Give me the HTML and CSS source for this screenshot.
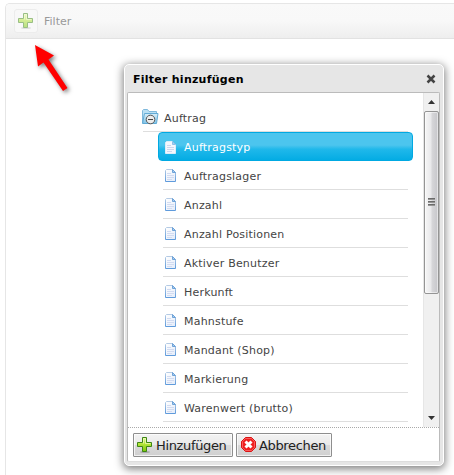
FILE: index.html
```html
<!DOCTYPE html>
<html lang="de">
<head>
<meta charset="utf-8">
<title>Filter</title>
<link rel="stylesheet" href="styles.css">
</head>
<body>
<svg width="0" height="0" class="defs">
  <defs>
    <linearGradient id="green" x1="0" y1="0" x2="0" y2="1"><stop offset="0" stop-color="#e4f99a"/><stop offset=".45" stop-color="#b5e63a"/><stop offset="1" stop-color="#79c708"/></linearGradient>
    <linearGradient id="paper" x1="0" y1="0" x2="1" y2="1"><stop offset="0" stop-color="#fff"/><stop offset="1" stop-color="#e4ecf9"/></linearGradient>
    <linearGradient id="edge" x1="0" y1="0" x2="0" y2="1"><stop offset="0" stop-color="#b4cae4"/><stop offset="1" stop-color="#5f9bdc"/></linearGradient>
    <linearGradient id="folder" x1="0" y1="0" x2="0" y2="1"><stop offset="0" stop-color="#d8effa"/><stop offset="1" stop-color="#7fc3e8"/></linearGradient>
    <symbol id="plus" viewBox="0 0 16 16">
      <ellipse cx="8" cy="15" rx="5" ry="1" fill="#000" opacity=".2"/>
      <path d="M5.500.5h4v5h5v4h-5v5h-4v-5h-5v-4h5z" fill="url(#green)" stroke="#3d8514"/>
      <path d="M6.500 6.500v-5h2v5h5" fill="none" stroke="#f0fcc0" opacity=".7"/>
    </symbol>
    <symbol id="page" viewBox="0 0 12 13">
      <path d="M1.500.5h6l3 3v9h-10v-11z" fill="url(#paper)" stroke="url(#edge)"/>
      <path d="M7.500.5v3h3z" fill="#a9cdf0" stroke="#6ea3d8"/>
      <path d="M2 4.500h4M2 6.500h7M2 8.500h7M2 10.500h5" stroke="#d2dbf1"/>
    </symbol>
    <symbol id="page-light" viewBox="0 0 12 13">
      <path d="M1.500.5h6l3 3v9h-10v-11z" fill="#f4f7fd" stroke="#dcecf9"/>
      <path d="M7.500.5v3h3z" fill="#a9cdf0" stroke="#8bc0e8"/>
      <path d="M2 4.500h4M2 6.500h7M2 8.500h7M2 10.500h5" stroke="#cdd6ee"/>
    </symbol>
  </defs>
</svg>
<section class="panel">
  <header class="toolbar">
    <span class="tool"><svg width="16" height="16"><use href="#plus"/></svg></span>
    <span class="tool-label">Filter</span>
  </header>
</section>

<svg class="arrow" width="46" height="60" viewBox="0 0 46 60"><path d="M5 5 24 15.500 18.500 19.500 37.500 48 33 51 13.500 22.500 8 26.500z" fill="#f00"/></svg>

<section class="dialog">
  <header class="title"><h1>Filter hinzufügen</h1>
    <svg width="10" height="10" viewBox="0 0 10 10"><path d="M1.500 1.500l7 7M8.500 1.500l-7 7" stroke="#444" stroke-width="2.500"/></svg>
  </header>
  <div class="body">
    <div class="view">
      <div class="tree">
        <div class="root">
          <svg width="17" height="16" viewBox="0 0 17 16"><path d="M.5 14V1.500l1-1h4l1.500 2h7.500V5" fill="#b9dff3" stroke="#7fb9dc"/><path d="M.5 14.500 2.500 4.500h13.500L14.500 14.500z" fill="url(#folder)" stroke="#62abd5"/><circle cx="8.500" cy="10.500" r="4.300" fill="#ececec" stroke="#555"/><path d="M6 10.500h5" stroke="#444"/></svg>
          <span>Auftrag</span>
        </div>
        <ul class="items">
          <li class="selected"><svg width="12" height="13"><use href="#page-light"/></svg><span>Auftragstyp</span></li>
          <li><svg width="12" height="13"><use href="#page"/></svg><span>Auftragslager</span></li>
          <li><svg width="12" height="13"><use href="#page"/></svg><span>Anzahl</span></li>
          <li><svg width="12" height="13"><use href="#page"/></svg><span>Anzahl Positionen</span></li>
          <li><svg width="12" height="13"><use href="#page"/></svg><span>Aktiver Benutzer</span></li>
          <li><svg width="12" height="13"><use href="#page"/></svg><span>Herkunft</span></li>
          <li><svg width="12" height="13"><use href="#page"/></svg><span>Mahnstufe</span></li>
          <li><svg width="12" height="13"><use href="#page"/></svg><span>Mandant (Shop)</span></li>
          <li><svg width="12" height="13"><use href="#page"/></svg><span>Markierung</span></li>
          <li><svg width="12" height="13"><use href="#page"/></svg><span>Warenwert (brutto)</span></li>
        </ul>
      </div>
      <div class="scrollbar">
        <div class="step"><svg width="7" height="4" viewBox="0 0 7 4"><path d="M0 4 3.500 0 7 4z" fill="#333"/></svg></div>
        <div class="thumb"><i></i><i></i><i></i></div>
        <div class="step down"><svg width="7" height="4" viewBox="0 0 7 4"><path d="M0 0h7L3.500 4z" fill="#333"/></svg></div>
      </div>
    </div>
    <footer class="actions">
      <button class="add"><svg width="16" height="16"><use href="#plus"/></svg><span>Hinzufügen</span></button>
      <button class="cancel"><svg width="15" height="15" viewBox="0 0 15 15"><path d="M4.500.5h6l4 4v6l-4 4h-6l-4-4v-6z" fill="#ef2020" stroke="#d81414"/><path d="M4.500 1.500h6l3 3v6l-3 3h-6l-3-3v-6z" fill="none" stroke="#ff7373" opacity=".7"/><path d="M4.500 4.500l6 6M10.500 4.500l-6 6" stroke="#fff" stroke-width="3"/></svg><span>Abbrechen</span></button>
    </footer>
  </div>
</section>
</body>
</html>
```
FILE: styles.css
```css
* { box-sizing: border-box; }
body {
  margin: 0;
  height: 475px;
  overflow: hidden;
  background: #fff;
  color: #444;
  font: 11px/14px "DejaVu Sans", Verdana, sans-serif;
  letter-spacing: .2px;
  position: relative;
}
svg { display: block; flex: none; }
.defs { position: absolute; }
.panel {
  margin: 3px 0 0 5px;
  height: 480px;
  border: 1px solid #e6e6e6;
  border-right: 0;
  border-radius: 5px 0 0 0;
}
.toolbar {
  height: 35px;
  display: flex;
  align-items: center;
  padding-left: 8px;
  background: linear-gradient(#f9f9f9, #f8f8f8 50%, #eee);
  border-bottom: 1px solid #e2e2e2;
  border-radius: 4px 0 0 0;
}
.tool {
  width: 24px;
  height: 24px;
  padding: 3px;
  border: 1px solid #ececec;
  border-radius: 3px;
  background: #f8f8f8;
}
.tool svg { opacity: .5; }
.tool-label { margin: 2px 0 0 6px; color: #999; letter-spacing: 0; }
.arrow {
  position: absolute;
  left: 30px;
  top: 40px;
  filter: drop-shadow(2px 2px 2px rgba(0, 0, 0, .5));
}
.dialog {
  position: absolute;
  left: 124px;
  top: 64px;
  width: 320px;
  height: 402px;
  padding: 0 3px 3px 2px;
  border: 1px solid #fff;
  border-radius: 5px;
  background: #e6e6e6;
  box-shadow: 0 2px 9px 1px rgba(0, 0, 0, .5);
}
.title {
  height: 27px;
  display: flex;
  justify-content: space-between;
  align-items: center;
  padding: 1px 4px 0 6px;
}
h1 { margin: 2px 0 0; font-size: 11px; line-height: 14px; color: #000; letter-spacing: .25px; }
.body {
  height: 370px;
  border: 1px solid #bbb;
  border-bottom-color: #ddd;
  border-radius: 2px;
  background: #fff;
}
.view {
  display: flex;
  justify-content: space-between;
  height: 335px;
  border-bottom: 1px dotted #aaa;
}
.tree { width: 285px; padding: 10px 0 0 14px; }
.root {
  height: 29px;
  display: flex;
  align-items: center;
  position: relative;
}
.root::after {
  content: "";
  position: absolute;
  left: 1px;
  right: 5px;
  bottom: 0;
  border-bottom: 1px solid #dedede;
}
.root svg { margin-top: -1px; }
.root span { margin: 2px 0 0 5px; }
.items { list-style: none; margin: 0; padding: 0 5px 0 21px; }
.items li {
  height: 29px;
  display: flex;
  align-items: center;
  padding: 1px 0 0 2px;
  border-bottom: 1px solid #dedede;
}
.items span { margin: 2px 0 0 7px; }
.items .selected {
  margin: 0 -5px;
  padding: 1px 0 0 6px;
  color: #fff;
  border: 1px solid #00a9e2;
  border-radius: 4px;
  background: linear-gradient(#4cc5ee, #4cc5ee 45%, #20b8ea 60%, #04ace4);
}
.selected span { margin-top: 1px; }
.scrollbar {
  width: 16px;
  background: #f0f0f0;
  display: flex;
  flex-direction: column;
  border-left: 1px solid #e6e6e6;
}
.step { height: 18px; display: flex; align-items: center; justify-content: center; }
.down { margin-top: auto; }
.thumb {
  height: 183px;
  padding-bottom: 2px;
  border: 1px solid #949494;
  border-radius: 2px;
  background: linear-gradient(90deg, #f6f6f6, #e9e9eb 45%, #d6d6d9 55%, #c6c6ca);
  box-shadow: inset 0 0 0 1px rgba(255, 255, 255, .5);
  display: flex;
  flex-direction: column;
  align-items: center;
  justify-content: center;
  gap: 1px;
}
.thumb i { width: 7px; height: 2px; background: linear-gradient(#555, #aaa); }
.actions { display: flex; gap: 3px; padding: 5px 0 0 5px; }
button {
  height: 24px;
  display: flex;
  align-items: center;
  padding: 0 0 0 3px;
  border: 1px solid #8e8e8e;
  border-radius: 1px;
  background: linear-gradient(#f3f3f3, #e9e9e9 50%, #dadada 51%, #cfcfcf);
  box-shadow: inset 0 0 0 1px rgba(255, 255, 255, .7);
  color: #222;
  font: 13px/18px "DejaVu Sans", Verdana, sans-serif;
  white-space: nowrap;
}
.add { width: 100px; }
.cancel { width: 96px; padding-left: 4px; }
button span { margin: 1px 0 0 3px; letter-spacing: -.35px; }
.cancel svg { margin-top: -1px; }
```
